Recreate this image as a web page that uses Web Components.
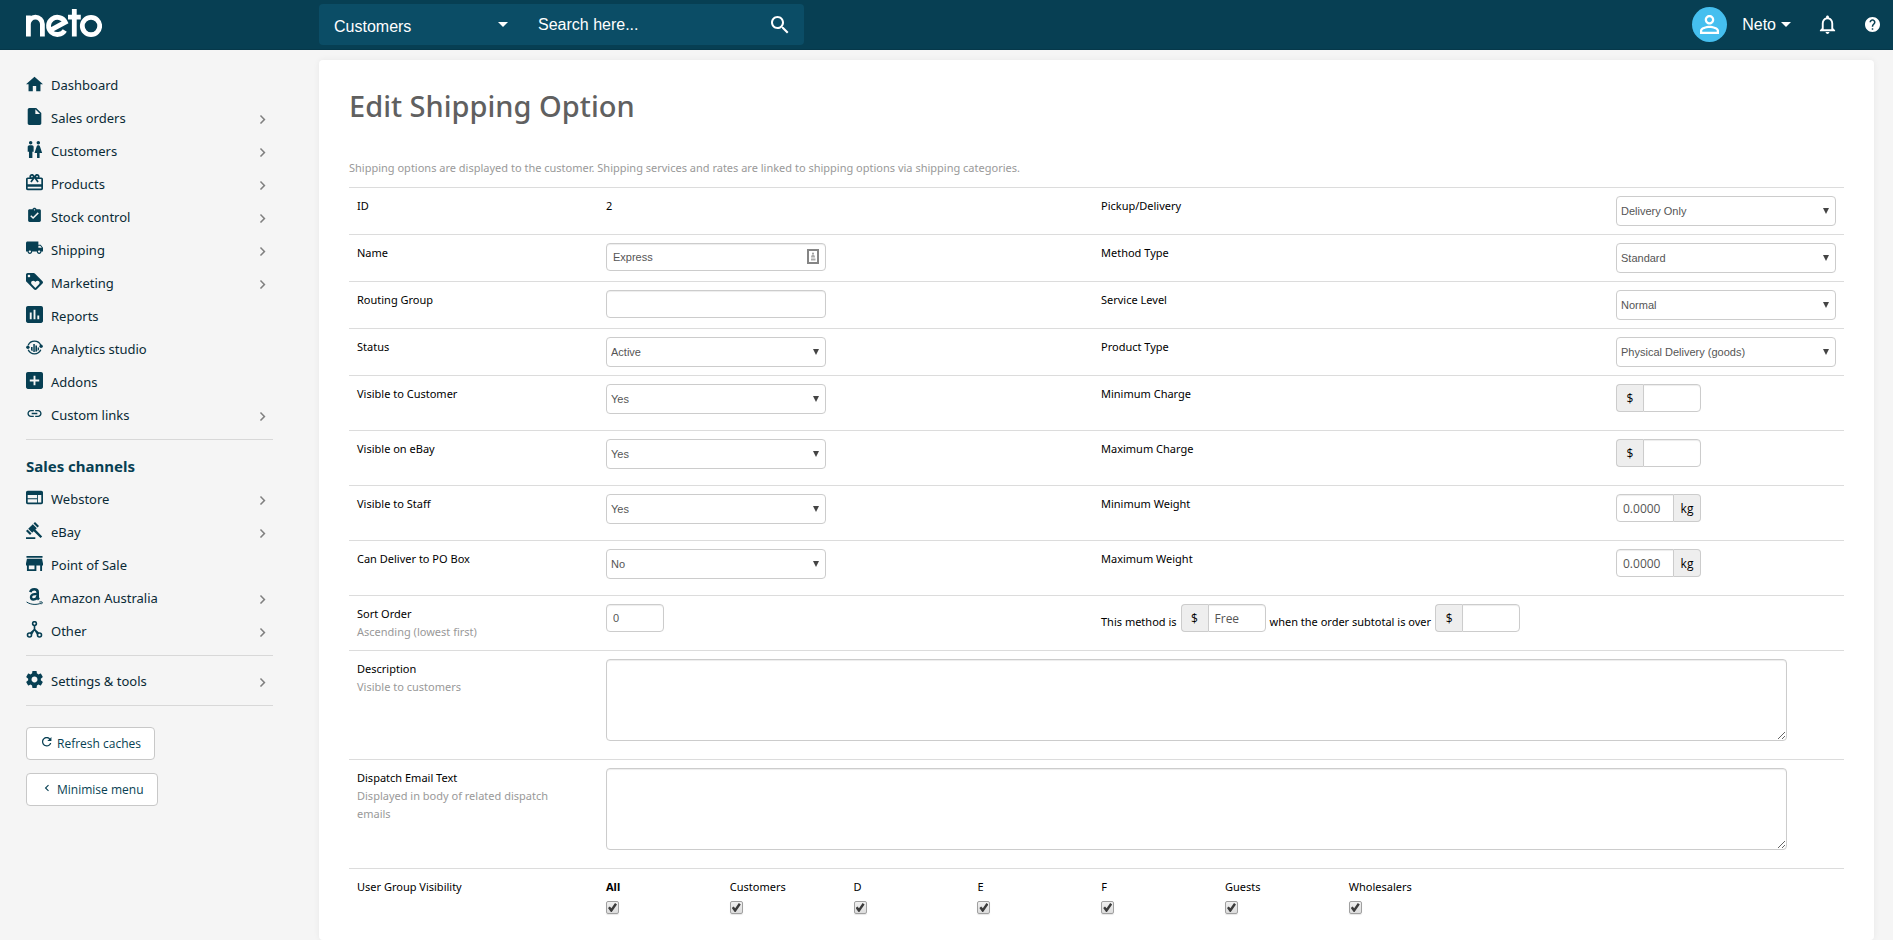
<!DOCTYPE html>
<html lang="en">
<head>
<meta charset="utf-8">
<title>Edit Shipping Option</title>
<style>
  html, body { margin: 0; }
  body {
    --ink: #073f53;
    --line: #dcdcdc;
    --field-line: #cccccc;
    --ui: "Noto Sans", "Open Sans", sans-serif;
    --compact: "Open Sans", "Noto Sans", sans-serif;
    --control: "Liberation Sans", Arial, sans-serif;
    font-family: var(--ui);
    color: #000;
    background: #f5f5f5;
  }
</style>
</head>
<body>
<neto-shell>
  <neto-topbar slot="top"></neto-topbar>

  <neto-sidebar slot="side">
    <nav-item icon="home">Dashboard</nav-item>
    <nav-item icon="file" more>Sales orders</nav-item>
    <nav-item icon="people" more>Customers</nav-item>
    <nav-item icon="gift" more>Products</nav-item>
    <nav-item icon="clipboard" more>Stock control</nav-item>
    <nav-item icon="truck" more>Shipping</nav-item>
    <nav-item icon="tag" more>Marketing</nav-item>
    <nav-item icon="chart">Reports</nav-item>
    <nav-item icon="analytics">Analytics studio</nav-item>
    <nav-item icon="plus">Addons</nav-item>
    <nav-item icon="link" more>Custom links</nav-item>
    <nav-rule></nav-rule>
    <nav-heading>Sales channels</nav-heading>
    <nav-item icon="web" more>Webstore</nav-item>
    <nav-item icon="gavel" more>eBay</nav-item>
    <nav-item icon="store">Point of Sale</nav-item>
    <nav-item icon="amazon" more>Amazon Australia</nav-item>
    <nav-item icon="nodes" more>Other</nav-item>
    <nav-rule></nav-rule>
    <nav-item icon="gear" more>Settings &amp; tools</nav-item>
    <nav-rule></nav-rule>
    <side-button slot="actions" icon="refresh">Refresh caches</side-button>
    <side-button slot="actions" icon="left">Minimise menu</side-button>
  </neto-sidebar>

  <page-card heading="Edit Shipping Option">
    <span slot="intro">Shipping options are displayed to the customer. Shipping services and rates are linked to shipping options via shipping categories.</span>
    <form-row>
      <form-field label="ID" kind="static" value="2"></form-field>
      <form-field label="Pickup/Delivery" kind="select" value="Delivery Only"></form-field>
    </form-row>
    <form-row>
      <form-field label="Name" kind="text" value="Express" contact></form-field>
      <form-field label="Method Type" kind="select" value="Standard"></form-field>
    </form-row>
    <form-row>
      <form-field label="Routing Group" kind="text"></form-field>
      <form-field label="Service Level" kind="select" value="Normal"></form-field>
    </form-row>
    <form-row>
      <form-field label="Status" kind="select" value="Active"></form-field>
      <form-field label="Product Type" kind="select" value="Physical Delivery (goods)"></form-field>
    </form-row>
    <form-row tall>
      <form-field label="Visible to Customer" kind="select" value="Yes"></form-field>
      <form-field label="Minimum Charge" kind="unit" before="$"></form-field>
    </form-row>
    <form-row tall>
      <form-field label="Visible on eBay" kind="select" value="Yes"></form-field>
      <form-field label="Maximum Charge" kind="unit" before="$"></form-field>
    </form-row>
    <form-row tall>
      <form-field label="Visible to Staff" kind="select" value="Yes"></form-field>
      <form-field label="Minimum Weight" kind="unit" after="kg" value="0.0000"></form-field>
    </form-row>
    <form-row tall>
      <form-field label="Can Deliver to PO Box" kind="select" value="No"></form-field>
      <form-field label="Maximum Weight" kind="unit" after="kg" value="0.0000"></form-field>
    </form-row>
    <form-row tall>
      <form-field label="Sort Order" hint="Ascending (lowest first)" kind="text" value="0" short></form-field>
      <free-method></free-method>
    </form-row>
    <form-row area>
      <form-field wide label="Description" hint="Visible to customers" kind="area"></form-field>
    </form-row>
    <form-row area>
      <form-field wide label="Dispatch Email Text" hint="Displayed in body of related dispatch emails" kind="area"></form-field>
    </form-row>
    <form-row>
      <group-visibility label="User Group Visibility" groups="All|Customers|D|E|F|Guests|Wholesalers"></group-visibility>
    </form-row>
  </page-card>
</neto-shell>

<script>
const ICONS = {
  home: ['2 1 20 20', '<path d="M10 20v-6h4v6h5v-8h3L12 3 2 12h3v8z"/>'],
  file: ['2 2 20 20', '<path d="M6 2c-1.1 0-1.99.9-1.99 2L4 20c0 1.1.89 2 1.99 2H18c1.1 0 2-.9 2-2V8l-6-6H6zm7 7V3.5L18.5 9H13z"/>'],
  people: ['2 2 20 20', '<path d="M5.5 22v-7.5H4V9c0-1.1.9-2 2-2h3c1.1 0 2 .9 2 2v5.5H9.5V22h-4zM18 22v-6h3l-2.54-7.63C18.18 7.55 17.42 7 16.56 7h-.12c-.86 0-1.63.55-1.9 1.37L12 16h3v6h3zM7.5 6c1.11 0 2-.89 2-2s-.89-2-2-2-2 .89-2 2 .89 2 2 2zm9 0c1.11 0 2-.89 2-2s-.89-2-2-2-2 .89-2 2 .89 2 2 2z"/>'],
  gift: ['2 2 20 20', '<path d="M20 6h-2.18c.11-.31.18-.65.18-1 0-1.66-1.34-3-3-3-1.05 0-1.96.54-2.5 1.35l-.5.67-.5-.68C10.96 2.54 10.05 2 9 2 7.34 2 6 3.34 6 5c0 .35.07.69.18 1H4c-1.11 0-1.99.89-1.99 2L2 19c0 1.11.89 2 2 2h16c1.11 0 2-.89 2-2V8c0-1.11-.89-2-2-2zm-5-2c.55 0 1 .45 1 1s-.45 1-1 1-1-.45-1-1 .45-1 1-1zM9 4c.55 0 1 .45 1 1s-.45 1-1 1-1-.45-1-1 .45-1 1-1zm11 15H4v-2h16v2zm0-5H4V8h5.08L7 10.83 8.62 12 11 8.76l1-1.36 1 1.36L15.38 12 17 10.83 14.92 8H20v6z"/>'],
  clipboard: ['0 0 24 24', '<path d="M19 3h-4.18C14.4 1.84 13.3 1 12 1c-1.3 0-2.4.84-2.82 2H5c-1.1 0-2 .9-2 2v14c0 1.1.9 2 2 2h14c1.1 0 2-.9 2-2V5c0-1.1-.9-2-2-2zm-7 0c.55 0 1 .45 1 1s-.45 1-1 1-1-.45-1-1 .45-1 1-1zm-2 14l-4-4 1.41-1.41L10 14.17l6.59-6.59L18 9l-8 8z"/>'],
  truck: ['1 2 22 22', '<path d="M20 8h-3V4H3c-1.1 0-2 .9-2 2v11h2c0 1.66 1.34 3 3 3s3-1.34 3-3h6c0 1.66 1.34 3 3 3s3-1.34 3-3h2v-5l-3-4zM6 18.5c-.83 0-1.5-.67-1.5-1.5s.67-1.5 1.5-1.5 1.5.67 1.5 1.5-.67 1.5-1.5 1.5zm13.5-9l1.96 2.5H17V9.5h2.5zm-1.5 9c-.83 0-1.5-.67-1.5-1.5s.67-1.5 1.5-1.5 1.5.67 1.5 1.5-.67 1.5-1.5 1.5z"/>'],
  tag: ['2 2 20 20', '<path d="M21.41 11.58l-9-9C12.05 2.22 11.55 2 11 2H4c-1.1 0-2 .9-2 2v7c0 .55.22 1.05.59 1.42l9 9c.36.36.86.58 1.41.58.55 0 1.05-.22 1.41-.59l7-7c.37-.36.59-.86.59-1.41 0-.55-.23-1.06-.59-1.42zM5.5 7C4.67 7 4 6.33 4 5.5S4.67 4 5.5 4 7 4.67 7 5.5 6.33 7 5.5 7zm11.77 8.27L13 19.54l-4.27-4.27C8.28 14.81 8 14.19 8 13.5c0-1.38 1.12-2.5 2.5-2.5.69 0 1.32.28 1.77.74l.73.72.73-.73c.45-.45 1.08-.73 1.77-.73 1.38 0 2.5 1.12 2.5 2.5 0 .69-.28 1.32-.73 1.77z"/>'],
  chart: ['3 3 18 18', '<path d="M19 3H5c-1.1 0-2 .9-2 2v14c0 1.1.9 2 2 2h14c1.1 0 2-.9 2-2V5c0-1.1-.9-2-2-2zM9 17H7v-7h2v7zm4 0h-2V7h2v10zm4 0h-2v-4h2v4z"/>'],
  analytics: ['0 0 17 17', '<path d="M2.2 6.2a6.9 6.9 0 0 1 12.6 0M14.8 10.8a6.9 6.9 0 0 1-12.6 0" fill="none" stroke="currentColor" stroke-width="1.3"/><path d="M5 8h1.6v4.3L5 11.2zM7.3 5h1.5v8H7.3zM9.4 6.5H11v5.9l-1.6.4zM11.6 8.6H13v2.2l-1.4 1.2z"/><circle cx="1.9" cy="8.3" r="1.7"/><circle cx="15.1" cy="7.3" r="1.7"/>'],
  plus: ['3 3 18 18', '<path d="M19 3H5c-1.11 0-2 .9-2 2v14c0 1.1.89 2 2 2h14c1.1 0 2-.9 2-2V5c0-1.1-.9-2-2-2zm-2 10h-4v4h-2v-4H7v-2h4V7h2v4h4v2z"/>'],
  link: ['0 0 24 24', '<path d="M3.9 12c0-1.71 1.39-3.1 3.1-3.1h4V7H7c-2.76 0-5 2.24-5 5s2.24 5 5 5h4v-1.9H7c-1.71 0-3.1-1.39-3.1-3.1zM8 13h8v-2H8v2zm9-6h-4v1.9h4c1.71 0 3.1 1.39 3.1 3.1s-1.39 3.1-3.1 3.1h-4V17h4c2.76 0 5-2.24 5-5s-2.24-5-5-5z"/>'],
  web: ['2 2 20 20', '<path d="M20 4H4c-1.1 0-1.99.9-1.99 2L2 18c0 1.1.9 2 2 2h16c1.1 0 2-.9 2-2V6c0-1.1-.9-2-2-2zm-5 14H4v-4h11v4zm0-5H4V9h11v4zm5 5h-4V9h4v9z"/>'],
  gavel: ['0 0 17 17', '<path d="M0 15.2h9.3V17H0zM9 0l4 4-1.5 1.5-4-4zM1.5 7.5l4 4L4 13 0 9zM6.8 2.2l4 4-1.4 1.4 6.8 6.8-1.7 1.7-6.8-6.8-1.5 1.5-4-4z"/>'],
  store: ['3 3 18 18', '<path d="M20.5 4h-17v2h17V4zm.5 10v-2l-1-5H4l-1 5v2h1v6h10v-6h4v6h2v-6h1zm-9 4H6v-4h6v4z"/>'],
  amazon: ['0 0 17 17', '<path d="M4.3 4.1C4.8 1.9 6.3 1.3 8.3 1.3c2.3 0 3.4.9 3.4 2.9v4.8c0 1 .3 1.6 1.2 2.6" fill="none" stroke="currentColor" stroke-width="2.6"/><path d="M11.2 5.9c-3.8 0-6.2.8-6.2 3.1 0 1.6.9 2.5 2.4 2.5 2.3 0 3.8-1.5 3.8-3.7" fill="none" stroke="currentColor" stroke-width="2.4"/><path d="M.6 14c4.5 3 10.5 3 14.8 1M13.4 14c1.6-.3 2.9-.2 2.9.3s-.4 1.4-1 2" fill="none" stroke="currentColor" stroke-width="1"/>'],
  nodes: ['0 0 17 17', '<g fill="none" stroke="currentColor" stroke-width="1.6"><circle cx="8.5" cy="2.6" r="1.9"/><circle cx="3.5" cy="14" r="2"/><circle cx="13.5" cy="14" r="2"/><path d="M8.5 4.5v4.2M4.5 12.2l4-3.7 4 3.7M5.5 13l3-5 3 5"/></g>'],
  gear: ['2 2 20 20', '<path d="M19.43 12.98c.04-.32.07-.64.07-.98s-.03-.66-.07-.98l2.11-1.65c.19-.15.24-.42.12-.64l-2-3.46c-.12-.22-.39-.3-.61-.22l-2.49 1c-.52-.4-1.08-.73-1.69-.98l-.38-2.65C14.46 2.18 14.25 2 14 2h-4c-.25 0-.46.18-.49.42l-.38 2.65c-.61.25-1.17.59-1.69.98l-2.49-1c-.23-.09-.49 0-.61.22l-2 3.46c-.13.22-.07.49.12.64l2.11 1.65c-.04.32-.07.65-.07.98s.03.66.07.98l-2.11 1.65c-.19.15-.24.42-.12.64l2 3.46c.12.22.39.3.61.22l2.49-1c.52.4 1.08.73 1.69.98l.38 2.65c.03.24.24.42.49.42h4c.25 0 .46-.18.49-.42l.38-2.65c.61-.25 1.17-.59 1.69-.98l2.49 1c.23.09.49 0 .61-.22l2-3.46c.12-.22.07-.49-.12-.64l-2.11-1.65zM12 15.5c-1.93 0-3.5-1.57-3.5-3.5s1.57-3.5 3.5-3.5 3.5 1.57 3.5 3.5-1.57 3.5-3.5 3.5z"/>'],
  search: ['3 3 18 18', '<path d="M15.5 14h-.79l-.28-.27C15.41 12.59 16 11.11 16 9.5 16 5.91 13.09 3 9.5 3S3 5.91 3 9.5 5.91 16 9.5 16c1.61 0 3.09-.59 4.23-1.57l.27.28v.79l5 4.99L20.49 19l-4.99-5zm-6 0C7.01 14 5 11.99 5 9.5S7.01 5 9.5 5 14 7.01 14 9.5 11.99 14 9.5 14z"/>'],
  bell: ['2 2 20 20', '<path d="M12 22c1.1 0 2-.9 2-2h-4c0 1.1.9 2 2 2zm6-6v-5c0-3.07-1.63-5.64-4.5-6.32V4c0-.83-.67-1.5-1.5-1.5s-1.5.67-1.5 1.5v.68C7.64 5.36 6 7.92 6 11v5l-2 2v1h16v-1l-2-2zm-2 1H8v-6c0-2.48 1.51-4.5 4-4.5s4 2.02 4 4.5v6z"/>'],
  help: ['2 2 20 20', '<path d="M12 2C6.48 2 2 6.48 2 12s4.48 10 10 10 10-4.48 10-10S17.52 2 12 2zm1 17h-2v-2h2v2zm2.07-7.75l-.9.92C13.45 12.9 13 13.5 13 15h-2v-.5c0-1.1.45-2.1 1.17-2.83l1.24-1.26c.37-.36.59-.86.59-1.41 0-1.1-.9-2-2-2s-2 .9-2 2H8c0-2.21 1.79-4 4-4s4 1.79 4 4c0 .88-.36 1.68-.93 2.25z"/>'],
  person: ['4 4 16 16', '<path d="M12 5.9c1.16 0 2.1.94 2.1 2.1s-.94 2.1-2.1 2.1S9.9 9.16 9.9 8s.94-2.1 2.1-2.1m0 9c2.97 0 6.1 1.46 6.1 2.1v1.1H5.9V17c0-.64 3.13-2.1 6.1-2.1M12 4C9.79 4 8 5.79 8 8s1.79 4 4 4 4-1.79 4-4-1.79-4-4-4zm0 9c-2.67 0-8 1.34-8 4v3h16v-3c0-2.66-5.33-4-8-4z"/>'],
  refresh: ['4 4 17 17', '<path d="M17.65 6.35C16.2 4.9 14.21 4 12 4c-4.42 0-7.99 3.58-7.99 8s3.57 8 7.99 8c3.73 0 6.84-2.55 7.73-6h-2.08c-.82 2.33-3.04 4-5.65 4-3.31 0-6-2.69-6-6s2.69-6 6-6c1.66 0 3.14.69 4.22 1.78L13 11h7V4l-2.35 2.35z"/>'],
  left: ['3 3 18 18', '<path d="M15.41 7.41L14 6l-6 6 6 6 1.41-1.41L10.83 12z"/>'],
  right: ['6 6 12 12', '<path d="M10 6L8.59 7.41 13.17 12l-4.58 4.59L10 18l6-6z"/>'],
  down: ['0 0 10 5', '<path d="M0 0h10L5 5z"/>'],
  contact: ['0 0 12 15', '<path d="M1 1h10v13H1z" fill="none" stroke="#858585" stroke-width="2"/><circle cx="6" cy="4.5" r="1" fill="#999"/><path d="M4 8.5c0-4 4-4 4 0zM4 9.5h4.5v2H4z" fill="#aaa"/>']
};
const icon = (name, w = 17, h = w) =>
  `<svg width="${w}" height="${h}" viewBox="${ICONS[name][0]}" fill="currentColor" aria-hidden="true">${ICONS[name][1]}</svg>`;

const define = (tag, css, markup) => customElements.define(tag, class extends HTMLElement {
  constructor() {
    super();
    this.attachShadow({ mode: 'open' });
  }
  connectedCallback() {
    this.shadowRoot.innerHTML = `<style>:host,*{box-sizing:border-box}svg{display:block;flex:none}${css}</style>${markup(this)}`;
  }
});

const CONTROL_CSS = `
  input, select, textarea {
    margin: 0; border: 1px solid var(--field-line); border-radius: 4px; background: #fff; color: #555;
    font: 11px/18px var(--control);
  }
  input, textarea { box-shadow: inset 0 1px 1px rgba(0,0,0,.075); }
  input:not([type=checkbox]) { height: 28px; padding: 4px 6px; }
  .unit { display: flex; width: 85px; height: 28px; font: 12px/24px var(--compact); }
  .unit input { min-width: 0; flex: 1; font: 12px/18px var(--compact); }
  .unit span { width: 27px; padding-top: 2px; text-align: center; background: #eee; border: 1px solid var(--field-line); }
  .before span { border-right: 0; border-radius: 4px 0 0 4px; }
  .before input { border-radius: 0 4px 4px 0; }
  .after span { border-left: 0; border-radius: 0 4px 4px 0; }
  .after input { border-radius: 4px 0 0 4px; padding-right: 0; }
`;

define('neto-shell', `
  :host { display: flex; flex-direction: column; min-height: 100vh; }
  .body { display: flex; flex: 1; }
  aside { width: 319px; flex: none; }
  main { flex: 1; min-width: 0; display: flex; padding: 10px 19px 0 0; }
  main ::slotted(*) { flex: 1; }
`, () => `<slot name="top"></slot><div class="body"><aside><slot name="side"></slot></aside><main><slot></slot></main></div>`);

define('neto-logo', `:host { display: block; }`, () => `
  <svg width="76" height="29" viewBox="0 0 76 29" fill="none" stroke="#fff" stroke-width="4.8" role="img" aria-label="neto">
    <path d="M2.4 27.5V6.5M2.4 27.5V15a7 6.8 0 0 1 14 0v12.5"/>
    <path d="M26 20.3L39.3 13.2A8.8 8.6 0 1 0 38.8 21.5"/>
    <path d="M48.3 0v27.5M42 8.2h12.8"/>
    <circle cx="65" cy="17" r="8.7"/>
  </svg>`);

define('neto-topbar', `
  :host { display: flex; height: 50px; background: #073f53; color: #fff; font: 16px/20px var(--control); border-bottom: 1px solid #06384a; }
  .brand { width: 319px; padding: 9px 26px; flex: none; }
  .brand a { display: block; width: 76px; }
  form { display: flex; align-items: center; width: 485px; height: 41px; margin-top: 4px; background: #0b4d66; border-radius: 4px; }
  .scope { display: flex; align-items: center; position: relative; width: 204px; height: 100%; }
  .scope svg { position: absolute; right: 15px; pointer-events: none; }
  select { appearance: none; width: 100%; border: 0; padding: 4px 15px 0; margin: 0; height: 100%; background: none; color: #fff; font: inherit; }
  input { flex: 1; min-width: 0; border: 0; padding: 0 15px; height: 100%; background: none; color: #fff; font: inherit; outline: 0; }
  input::placeholder { color: #fff; opacity: 1; }
  button { display: flex; align-items: center; gap: 5px; border: 0; padding: 0; margin: 0; background: none; color: inherit; font: inherit; }
  form button { padding: 0 15px; }
  .user { display: flex; align-items: center; height: 49px; margin-left: auto; padding-right: 13px; gap: 15px; }
  .avatar { display: grid; place-items: center; width: 35px; height: 35px; border-radius: 50%; background: #45bfef; }
  .bell { margin: 0 13px 0 12px; }
`, () => `
  <div class="brand"><a href="#" aria-label="neto"><neto-logo></neto-logo></a></div>
  <form>
    <div class="scope"><select aria-label="Search in"><option>Customers</option></select>${icon('down', 10, 5)}</div>
    <input type="search" placeholder="Search here..." aria-label="Search">
    <button type="button" aria-label="Search">${icon('search', 18)}</button>
  </form>
  <div class="user">
    <span class="avatar">${icon('person', 19)}</span>
    <button type="button">Neto ${icon('down', 10, 5)}</button>
    <button type="button" class="bell" aria-label="Notifications">${icon('bell', 19)}</button>
    <button type="button" aria-label="Help">${icon('help', 15)}</button>
  </div>`);

define('neto-sidebar', `
  :host { display: block; padding: 19px 46px 0 26px; }
  .actions { display: flex; flex-direction: column; align-items: flex-start; gap: 13px; margin-top: 21px; }
`, () => `<nav><slot></slot></nav><div class="actions"><slot name="actions"></slot></div>`);

define('nav-item', `
  :host { display: block; }
  a { display: flex; align-items: center; gap: 8px; height: 33px; padding: 0 6px 2px 0; color: #0a2a36; text-decoration: none; font-size: 13px; line-height: 20px; }
  .lead { color: var(--ink); padding-bottom: 2px; }
  .more { margin-left: auto; padding-top: 4px; color: #808080; }
`, el => `<a href="#"><span class="lead">${icon(el.getAttribute('icon'))}</span><slot></slot>${el.hasAttribute('more') ? `<span class="more">${icon('right', 9)}</span>` : ''}</a>`);

define('nav-rule', `:host { display: block; height: 1px; margin: 7px 0 9px; background: #d8d8d8; }`, () => '');

define('nav-heading', `
  :host { display: block; }
  h2 { margin: 0; font-size: 15px; font-weight: 700; line-height: 34px; color: var(--ink); }
`, () => `<h2><slot></slot></h2>`);

define('side-button', `
  :host { display: block; }
  button { display: flex; align-items: center; gap: 5px; height: 33px; padding: 0 13px 0 15px; border: 1px solid #c8c8c8; border-radius: 4px; background: #fff; color: var(--ink); font: 12px/18px var(--compact); }
  svg { margin-bottom: 4px; }
`, el => `<button type="button">${icon(el.getAttribute('icon'), 10)}<slot></slot></button>`);

define('page-card', `
  :host { display: block; padding: 26px 30px 0; background: #fff; border-radius: 4px; box-shadow: 0 0 6px rgba(0,0,0,.06); }
  h1 { margin: 0 0 33px; font-size: 29px; font-weight: 500; line-height: 40px; color: #606060; }
  p { margin: 0 0 10px; font-size: 11px; line-height: 18px; color: #999; }
`, el => `<h1>${el.getAttribute('heading')}</h1><p><slot name="intro"></slot></p><slot></slot>`);

define('form-row', `
  :host { display: grid; grid-template-columns: 249fr 495fr 515fr 236fr; min-height: 47px; border-top: 1px solid var(--line); }
  :host([tall]) { min-height: 55px; }
  :host([area]) { min-height: 109px; }
`, () => `<slot></slot>`);

let serial = 0;
const controls = {
  static: (el, id) => `<output id="${id}">${el.getAttribute('value')}</output>`,
  select: (el, id) => `<select id="${id}"><option>${el.getAttribute('value')}</option></select>`,
  text: (el, id) => `<span class="text"><input id="${id}" type="text" value="${el.getAttribute('value') || ''}">${el.hasAttribute('contact') ? icon('contact', 12, 15) : ''}</span>`,
  area: (el, id) => `<textarea id="${id}"></textarea>`,
  unit: (el, id) => {
    const before = el.getAttribute('before'), after = el.getAttribute('after');
    return `<div class="unit ${before ? 'before' : 'after'}">${before ? `<span>${before}</span>` : ''}<input id="${id}" type="text" value="${el.getAttribute('value') || ''}">${after ? `<span>${after}</span>` : ''}</div>`;
  }
};
define('form-field', `
  :host { display: grid; grid-column: span 2; grid-template-columns: subgrid; font-size: 11px; line-height: 18px; }
  :host([wide]) { grid-column: span 4; }
  .name, .value { padding: 8px; min-width: 0; }
  .name, :host([kind=static]) .value { padding-top: 9px; }
  :host([wide]) .value { grid-column: span 3; }
  :host([wide]) .name { padding-right: 24px; }
  label, output { display: block; }
  small { display: block; font-size: inherit; color: #999; }
  ${CONTROL_CSS}
  .text { display: block; position: relative; max-width: 220px; }
  .text input { display: block; width: 100%; }
  .text svg { position: absolute; right: 7px; top: 6px; }
  :host([short]) .text { max-width: 58px; }
  select { display: block; appearance: none; width: 100%; max-width: 220px; height: 30px; padding: 0 20px 0 4px;
    background: #fff url('data:image/svg+xml,<svg xmlns="http://www.w3.org/2000/svg" width="6" height="6"><path d="M0 0h6L3 6z" fill="%23444"/></svg>') no-repeat right 6px center; }
  textarea { display: block; width: 96%; height: 82px; padding: 4px 6px; }
`, el => {
  const id = 'f' + (++serial), hint = el.getAttribute('hint');
  return `<div class="name"><label for="${id}">${el.getAttribute('label')}</label>${hint ? `<small>${hint}</small>` : ''}</div><div class="value">${controls[el.getAttribute('kind')](el, id)}</div>`;
});

define('free-method', `
  :host { display: flex; grid-column: span 2; align-items: flex-start; gap: 4px; padding: 8px; font-size: 11px; line-height: 18px; }
  label { padding-top: 9px; }
  ${CONTROL_CSS}
`, () => `
  <label for="amount">This method is</label>
  <div class="unit before"><span>$</span><input id="amount" type="text" value="Free"></div>
  <label for="over">when the order subtotal is over</label>
  <div class="unit before"><span>$</span><input id="over" type="text"></div>`);

define('group-visibility', `
  :host { display: grid; grid-column: span 4; grid-template-columns: subgrid; font-size: 11px; line-height: 18px; }
  .name { padding: 9px 8px 8px; }
  ul { display: flex; grid-column: span 3; list-style: none; margin: 0; padding: 9px 0 8px 8px; }
  li { flex: 0 0 10%; }
  label { display: flex; flex-direction: column; gap: 5px; }
  li:first-child { font-weight: 700; }
  input { appearance: none; display: grid; place-items: center; width: 13px; height: 13px; margin: 0; border: 1px solid #a0a0a0; border-radius: 2px; background: linear-gradient(#f0f0f0, #dcdcdc); box-shadow: 0 1px 1px rgba(0,0,0,.1); }
  input:checked::before { content: ""; width: 9px; height: 9px; background: #3c3c3c; clip-path: polygon(0 55%, 20% 38%, 38% 58%, 78% 0, 100% 16%, 42% 100%, 32% 100%); }
`, el => `<div class="name" id="title">${el.getAttribute('label')}</div><ul aria-labelledby="title">${
  el.getAttribute('groups').split('|').map(g => `<li><label>${g}<input type="checkbox" checked></label></li>`).join('')}</ul>`);
</script>
</body>
</html>
